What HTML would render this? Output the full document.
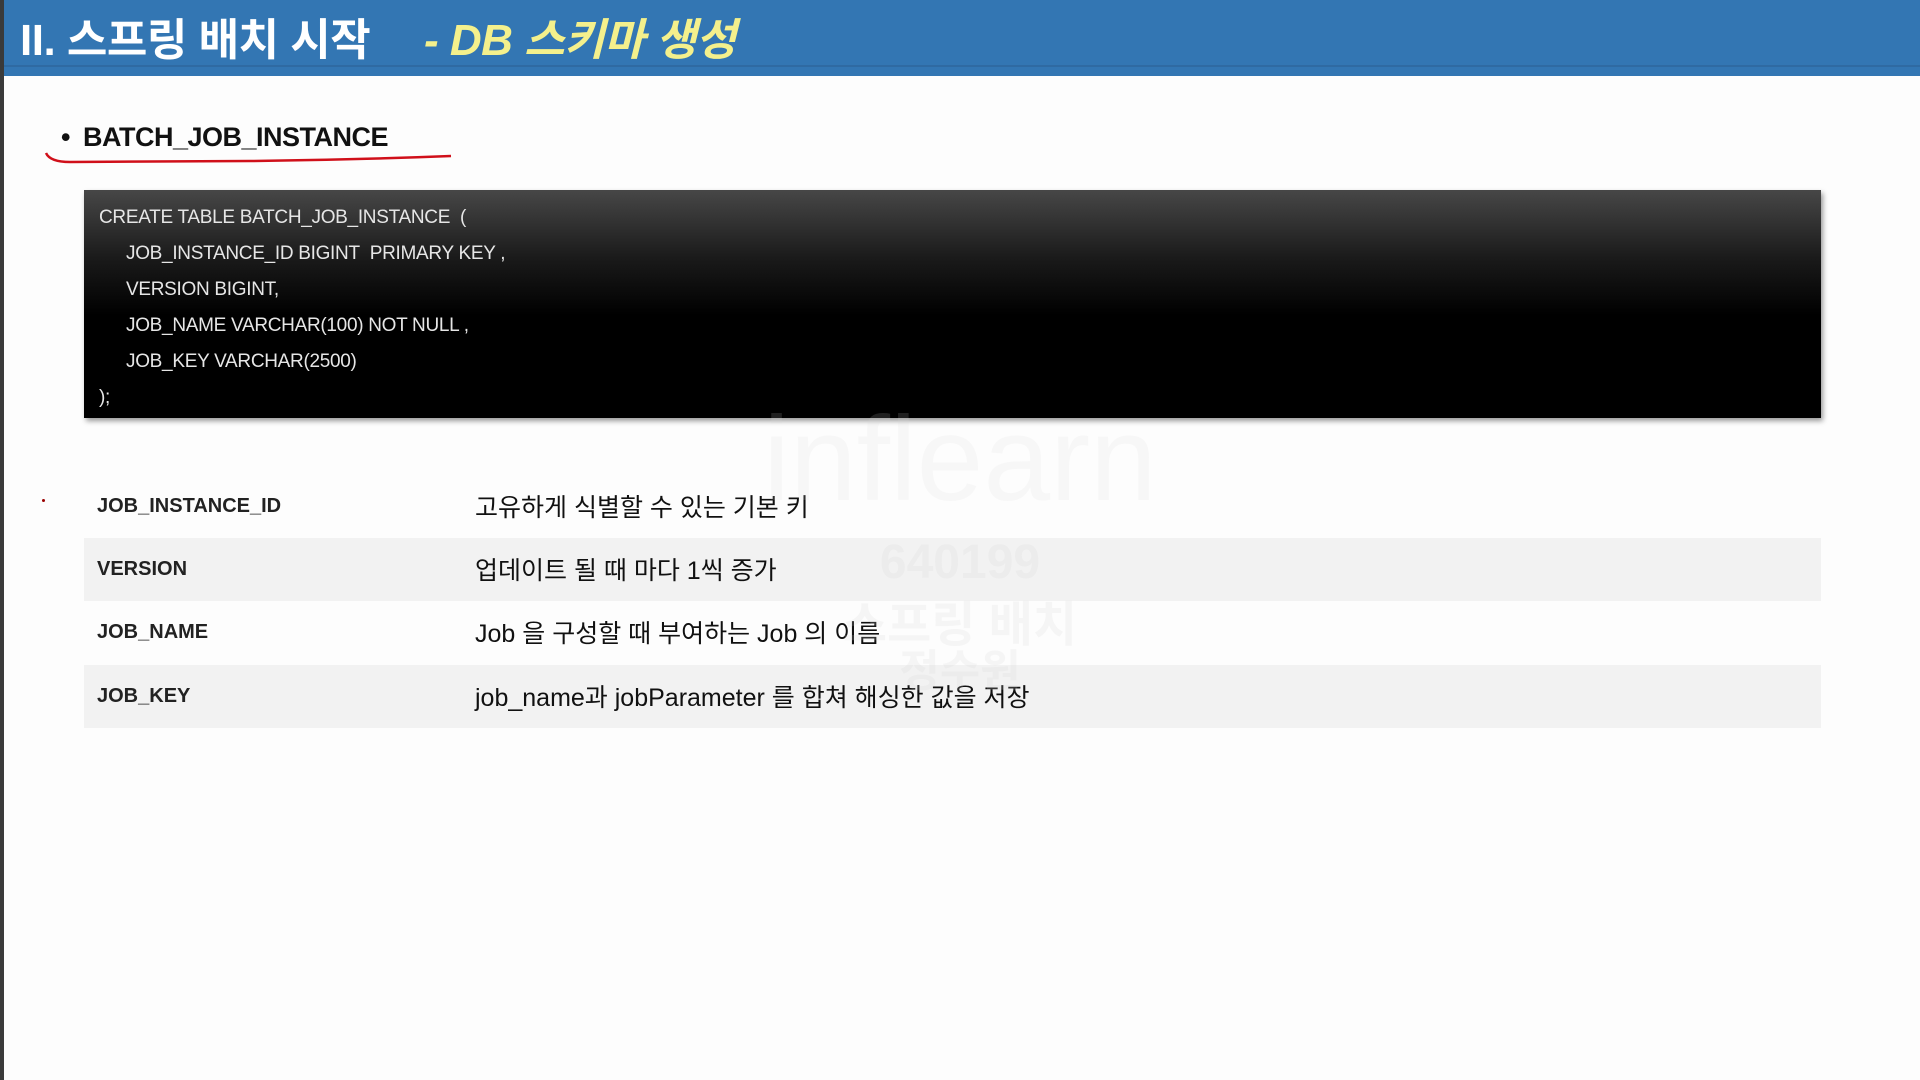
<!DOCTYPE html>
<html><head><meta charset="utf-8"><style>
body{margin:0;width:1920px;height:1080px;background:#fdfdfd;position:relative;overflow:hidden;font-family:"Liberation Sans","Noto Sans CJK KR",sans-serif;}
.lb{position:absolute;left:0;top:0;width:4px;height:1080px;background:#3a3a3a;}
.hdr{position:absolute;left:0;top:0;width:1920px;height:76px;background:#3376b3;}
.hdr .ln{position:absolute;left:0;top:65px;width:1920px;height:2px;background:#2f6aa2;}
.t1{position:absolute;left:20px;top:4px;font-size:44px;font-weight:bold;color:#fff;white-space:nowrap;letter-spacing:-0.5px;}
.t2{position:absolute;left:424px;top:4px;font-size:44px;font-weight:bold;font-style:italic;color:#f4f08c;white-space:nowrap;letter-spacing:-0.5px;}
.h2{position:absolute;left:61px;top:122px;font-size:27px;font-weight:bold;color:#111;white-space:nowrap;letter-spacing:-0.5px;}
.h2 span{margin-left:6px;}
.code{position:absolute;left:84px;top:190px;width:1737px;height:228px;background:linear-gradient(#474747 0%,#1a1a1a 30%,#000 55%,#000 100%);box-shadow:2px 3px 5px rgba(0,0,0,.4);}
.code div{position:absolute;font-size:19px;color:#e6e6e6;white-space:nowrap;letter-spacing:-0.3px;}
.row{position:absolute;left:84px;width:1737px;height:63px;}
.row.g{background:#f2f2f2;}
.k{position:absolute;left:13px;top:20px;font-size:20px;font-weight:bold;color:#222;}
.v{position:absolute;left:391px;top:13px;font-size:25px;color:#111;white-space:nowrap;}
.wm{position:absolute;color:rgba(210,210,210,.18);font-weight:bold;white-space:nowrap;text-align:center;}
</style></head><body>
<div class="hdr"><div class="ln"></div></div>
<div class="lb"></div>
<div class="t1">II. 스프링 배치 시작</div>
<div class="t2">- DB 스키마 생성</div>
<div class="h2">•&nbsp;<span>BATCH_JOB_INSTANCE</span></div>
<svg style="position:absolute;left:0;top:0" width="600" height="200"><path d="M46 153 Q50 162 70 162 L250 161 Q350 160 451 156" stroke="#d0101a" stroke-width="2.5" fill="none"/></svg>
<div class="code">
<div style="left:15px;top:17px">CREATE TABLE BATCH_JOB_INSTANCE&nbsp; (</div>
<div style="left:42px;top:53px">JOB_INSTANCE_ID BIGINT&nbsp; PRIMARY KEY ,</div>
<div style="left:42px;top:89px">VERSION BIGINT,</div>
<div style="left:42px;top:125px">JOB_NAME VARCHAR(100) NOT NULL ,</div>
<div style="left:42px;top:161px">JOB_KEY VARCHAR(2500)</div>
<div style="left:15px;top:197px">);</div>
</div>
<div style="position:absolute;left:42px;top:499px;width:3px;height:3px;border-radius:50%;background:#900"></div>
<div class="row" style="top:475px"><div class="k">JOB_INSTANCE_ID</div><div class="v">고유하게 식별할 수 있는 기본 키</div></div>
<div class="row g" style="top:538px"><div class="k">VERSION</div><div class="v">업데이트 될 때 마다 1씩 증가</div></div>
<div class="row" style="top:601px"><div class="k">JOB_NAME</div><div class="v">Job 을 구성할 때 부여하는 Job 의 이름</div></div>
<div class="row g" style="top:665px"><div class="k">JOB_KEY</div><div class="v">job_name과 jobParameter 를 합쳐 해싱한 값을 저장</div></div>
<div class="wm" style="left:660px;top:390px;width:600px;font-size:120px;font-weight:normal;color:rgba(215,215,215,.15)">inflearn</div>
<div class="wm" style="left:760px;top:535px;width:400px;font-size:48px">640199</div>
<div class="wm" style="left:760px;top:585px;width:400px;font-size:48px">스프링 배치</div>
<div class="wm" style="left:760px;top:635px;width:400px;font-size:44px">정수원</div>
</body></html>
